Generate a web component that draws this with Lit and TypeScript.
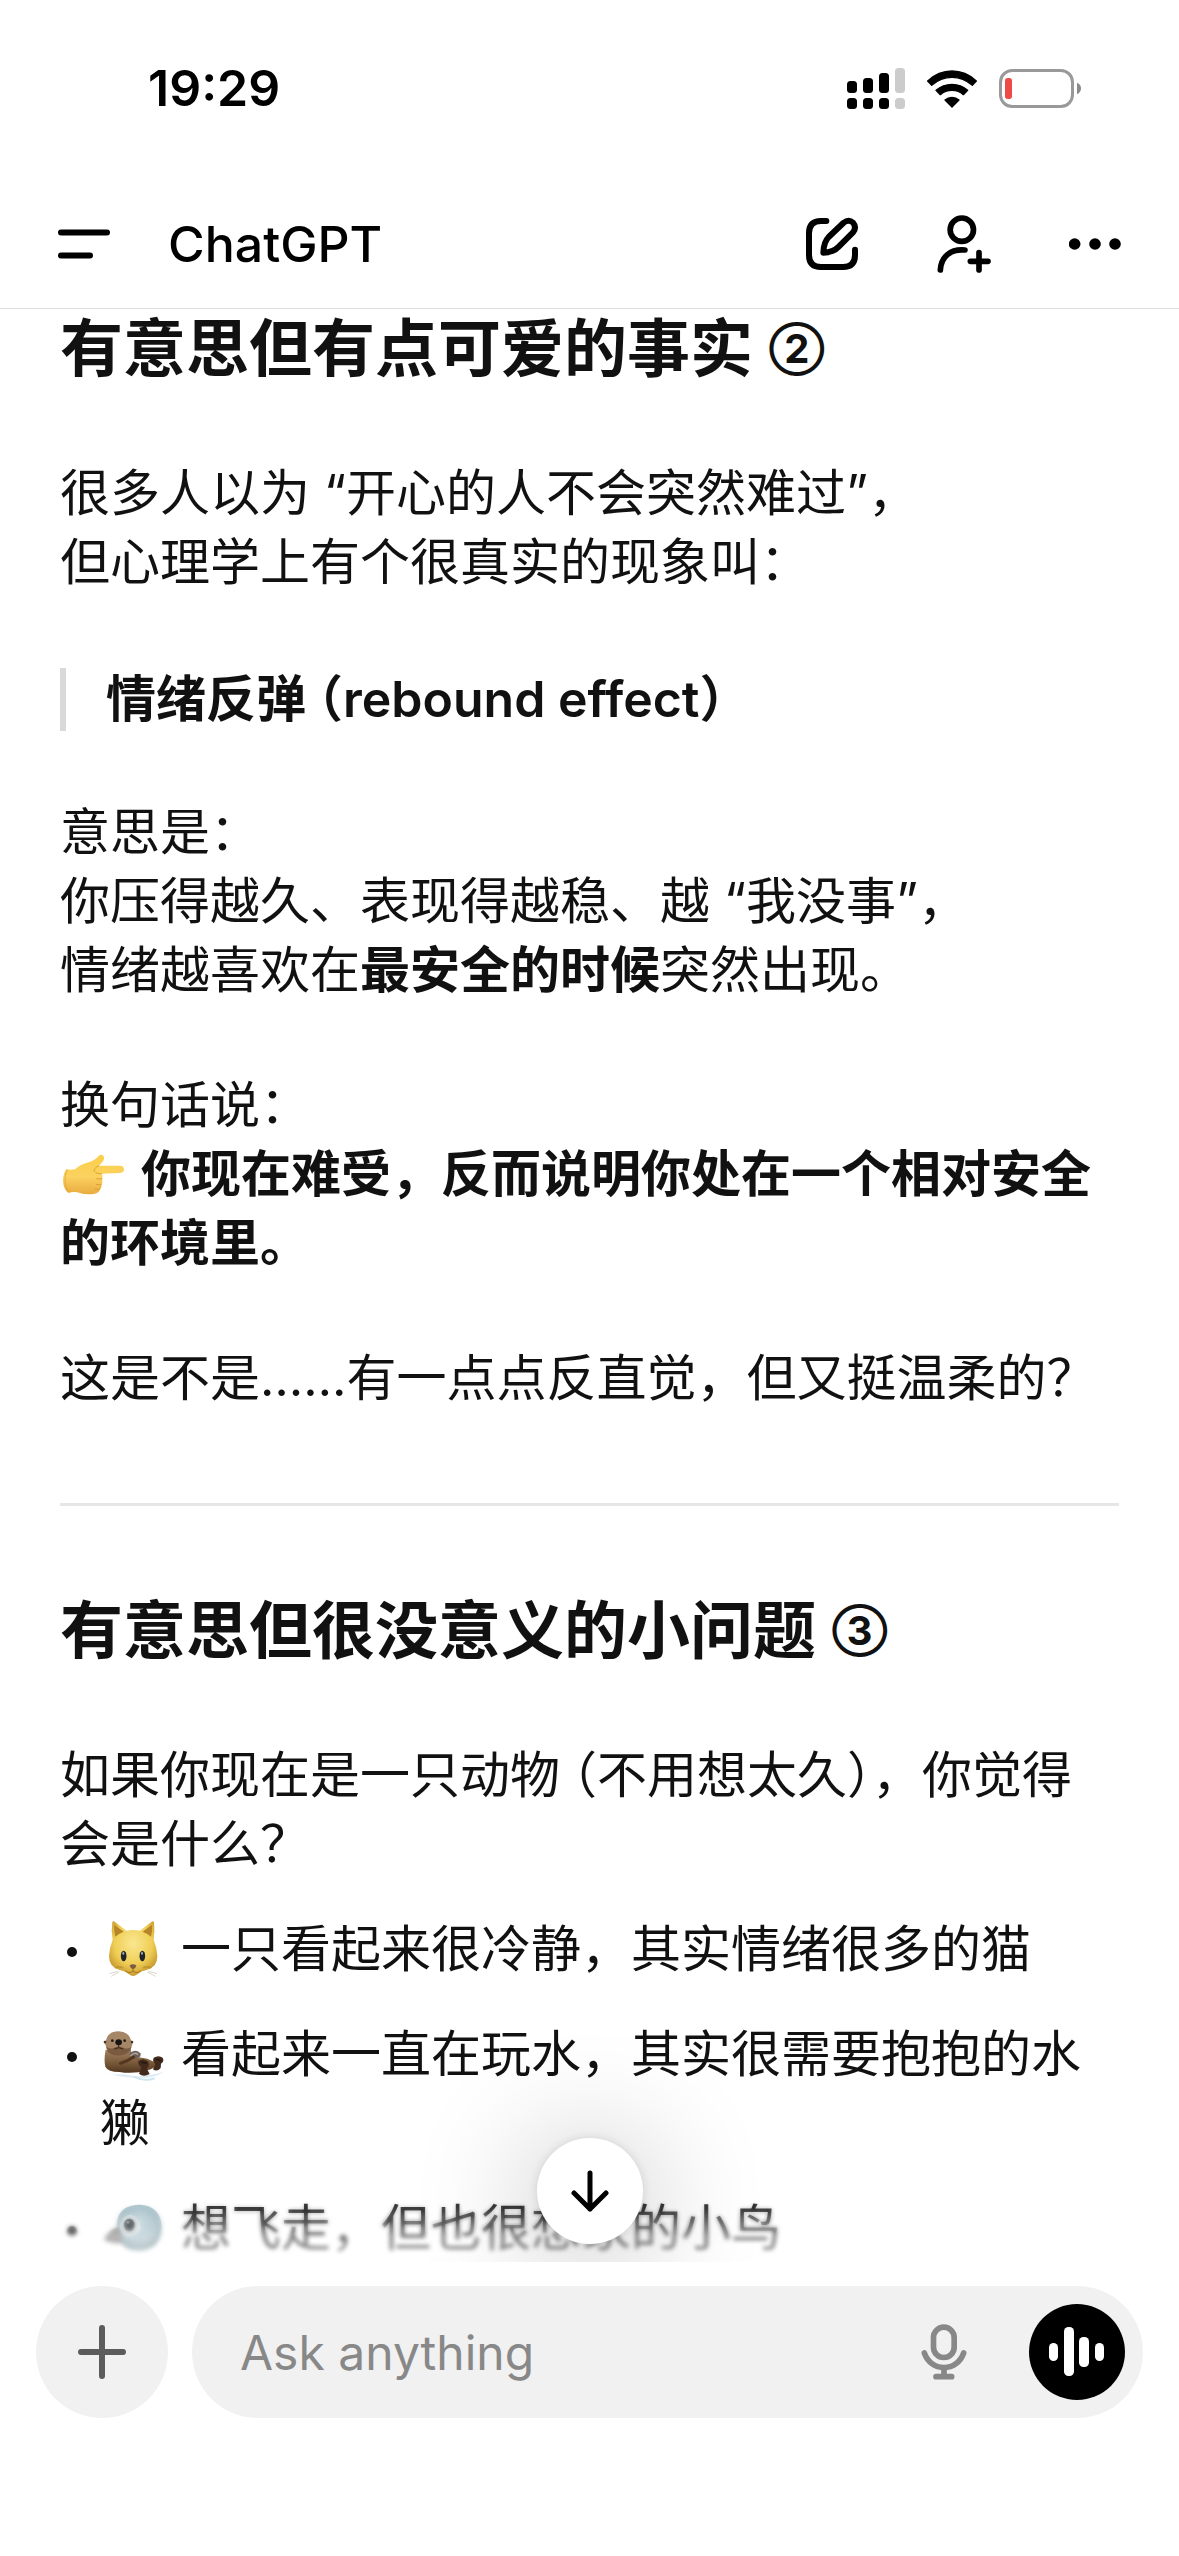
import { LitElement, html, css, svg } from "lit";
import { customElement } from "lit/decorators.js";

const signalIcon = html`<svg width="58" height="41" viewBox="0 0 58 41" role="img" aria-label="Signal">
  <g fill="#000">
    <rect x="0" y="13" width="10" height="12" rx="3.5" />
    <rect x="16" y="10" width="10" height="15" rx="3.5" />
    <rect x="32" y="5" width="10" height="20" rx="3.5" />
    <rect x="0" y="30" width="10" height="11" rx="3.5" />
    <rect x="16" y="30" width="10" height="11" rx="3.5" />
    <rect x="32" y="30" width="10" height="11" rx="3.5" />
  </g>
  <g fill="#ccc">
    <rect x="48" y="0" width="10" height="25" rx="3.5" />
    <rect x="48" y="30" width="10" height="11" rx="3.5" />
  </g>
</svg>`;

const wifiIcon = html`<svg width="50" height="38" viewBox="443 85 150 114" role="img" aria-label="Wi-Fi">
  <g stroke="#000" stroke-width="4" stroke-linejoin="round">
    <path d="M445 118Q477 88 518 88Q559 88 591 118L579 131Q552 107 518 107Q484 107 457 131Z" />
    <path d="M470 146Q491 128 518 128Q545 128 565 146L552 159Q538 146 518 146Q498 146 483 159Z" />
    <path d="M497 175Q506 167 518 167Q530 167 539 175L518 196Z" />
  </g>
</svg>`;

const batteryIcon = html`<svg width="82" height="39" viewBox="660 84 246 117" role="img" aria-label="Battery low">
  <rect x="664.5" y="88.5" width="216" height="108" rx="35" fill="none" stroke="#999" stroke-width="9" />
  <rect x="678" y="111" width="21" height="63" rx="8" fill="#ef4b46" />
  <path d="M894 125Q906 130 906 142Q906 154 894 160Z" fill="#8a8a8a" />
</svg>`;

const menuIcon = html`<svg width="52" height="30" viewBox="0 0 52 30" fill="none" stroke="#000" stroke-width="6" stroke-linecap="round">
  <path d="M3 3.500H49M3 26.500H32" />
</svg>`;

const editIcon = html`<svg width="54" height="54" viewBox="75 531 162 162" fill="none" stroke="#000" stroke-width="18" stroke-linecap="round" stroke-linejoin="round">
  <path d="M139 543H123Q87 543 87 580V645Q87 681 123 681H189Q225 681 225 645V629" />
  <path d="M130 638Q131 606 146 591L190 549Q206 536 219 548Q231 562 219 577L174 622Q161 637 130 638Z" />
</svg>`;

const personIcon = html`<svg width="54" height="58" viewBox="476 522 162 174" fill="none" stroke="#000" stroke-width="17" stroke-linecap="round">
  <circle cx="550.500" cy="566" r="35" />
  <path d="M486 687C488 648 516 623 560 627" />
  <path d="M602 635V687M576 661H629" />
</svg>`;

const moreIcon = html`<svg width="52" height="12" viewBox="870 592 156 36">
  <circle cx="887" cy="610" r="17.500" /><circle cx="948" cy="610" r="17.500" /><circle cx="1008" cy="610" r="17.500" />
</svg>`;

const arrowIcon = html`<svg width="38" height="42" viewBox="0 0 38 42" fill="none" stroke="#000" stroke-width="5" stroke-linecap="round" stroke-linejoin="round">
  <path d="M19 3V39M3 23L19 39L35 23" />
</svg>`;

const plusIcon = html`<svg width="48" height="54" viewBox="0 0 48 54" fill="none" stroke="#5c5c5c" stroke-width="6" stroke-linecap="round">
  <path d="M24 3V51M3 27H45" />
</svg>`;

const micIcon = html`<svg width="46" height="56" viewBox="425 194 138 168" fill="none" stroke="#888" stroke-width="17" stroke-linecap="round">
  <rect x="462.500" y="203.500" width="62" height="91" rx="31" />
  <path d="M435 281C445 309 468 325 494 325S543 309 553 281" />
  <path d="M494 328V350M470 352H517" />
</svg>`;

const voiceIcon = html`<svg width="56" height="50" viewBox="0 0 56 50" fill="#fff">
  <rect x="0" y="16" width="9" height="18" rx="4.500" />
  <rect x="15" y="0" width="10" height="49" rx="4.500" />
  <rect x="30" y="10" width="10" height="30" rx="4.500" />
  <rect x="46" y="16" width="9" height="18" rx="4.500" />
</svg>`;

const emojiArt = {
  hand: svg`
    <defs>
      <linearGradient id="hand-skin" x1="0" y1="0" x2="0" y2="1">
        <stop offset="0" stop-color="#fbcf4a" /><stop offset=".55" stop-color="#fbd260" /><stop offset="1" stop-color="#e9ab3e" />
      </linearGradient>
    </defs>
    <path d="M80 90Q88 94 105 91Q119 77 139 72Q164 66 176 51Q184 44 190 51Q196 58 187 69Q182 76 176 80L240 80Q252 81 252 91Q252 101 241 102L184 104Q190 110 186 119Q190 130 184 136Q187 146 180 150Q179 161 164 164Q136 169 112 160Q94 158 86 162Q70 154 69 124Q70 100 80 90Z" fill="url(#hand-skin)" />
    <path d="M176 80Q160 88 162 97M184 104Q169 105 166 99M186 119Q176 122 170 119M184 136Q176 139 169 136M180 150Q172 153 165 150" fill="none" stroke="#d9982f" stroke-width="2.500" stroke-linecap="round" />
    <path d="M81 92Q74 110 75 125Q76 149 88 159" fill="none" stroke="#e3a537" stroke-width="4" opacity=".6" />`,
  cat: svg`
    <defs>
      <radialGradient id="cat-fur" cx=".5" cy=".4" r=".6">
        <stop offset="0" stop-color="#f9e791" /><stop offset=".65" stop-color="#f0ce55" /><stop offset="1" stop-color="#c79a2f" />
      </radialGradient>
    </defs>
    <path d="M157 70Q158 65 164 68L199 95Q219 91 240 95L275 68Q281 65 282 71Q285 94 281 122Q291 147 292 171Q292 203 262 212Q243 216 232 226Q219 236 207 226Q196 216 177 212Q147 203 147 171Q148 147 158 122Q153 95 157 70Z" fill="url(#cat-fur)" />
    <path d="M163 77Q161 97 166 113Q175 104 191 98ZM276 77Q278 97 273 113Q264 104 248 98Z" fill="#b58526" />
    <ellipse cx="191" cy="171" rx="8.500" ry="16" fill="#1e252b" /><ellipse cx="247" cy="171" rx="8.500" ry="16" fill="#1e252b" />
    <ellipse cx="190" cy="163" rx="3" ry="4.500" fill="#9daab0" /><ellipse cx="246" cy="163" rx="3" ry="4.500" fill="#9daab0" />
    <path d="M209 199Q219 192 229 199Q228 208 219 211Q210 208 209 199Z" fill="#7d5c45" />
    <path d="M219 210V216M219 216Q207 226 196 215M219 216Q231 226 242 215" fill="none" stroke="#a8791e" stroke-width="3" />
    <path d="M165 207Q177 200 190 207M249 207Q262 200 274 207" fill="none" stroke="#b98d2c" stroke-width="5" opacity=".7" />
    <path d="M173 217L149 224M177 219L154 232M266 217L291 224M262 219L287 232" stroke="#b7ad92" stroke-width="1.500" />`,
  otter: svg`
    <defs>
      <linearGradient id="otter-fur" x1="0" y1="0" x2="0" y2="1">
        <stop offset="0" stop-color="#a48565" /><stop offset=".5" stop-color="#80603f" /><stop offset="1" stop-color="#52351f" />
      </linearGradient>
    </defs>
    <path d="M128 520Q150 530 190 526Q240 540 311 518Q285 538 235 537Q170 534 128 520Z" fill="#dcecf6" />
    <path d="M222 533Q250 549 284 538" fill="none" stroke="#cfe3f0" stroke-width="5" />
    <path d="M137 452Q131 483 136 503Q144 519 178 519Q222 526 259 514Q284 511 291 493L262 479Q235 474 216 475L212 448Z" fill="url(#otter-fur)" />
    <path d="M138 424Q144 397 175 397Q207 398 213 424Q221 430 216 439Q213 456 198 463Q175 471 152 463Q138 455 137 438Q129 432 138 424Z" fill="#a58768" />
    <path d="M140 443Q153 453 166 445Q176 440 187 445Q200 453 214 443Q210 464 188 468Q160 474 144 459Z" fill="#7b5b40" />
    <ellipse cx="176" cy="430" rx="10" ry="9" fill="#171413" />
    <path d="M176 436V445M163 450Q176 442 190 450" fill="none" stroke="#382619" stroke-width="3" />
    <circle cx="157" cy="425" r="4" fill="#251a13" /><circle cx="194" cy="425" r="4" fill="#251a13" />
    <circle cx="135" cy="429" r="4" fill="#493321" /><circle cx="216" cy="429" r="4" fill="#493321" />
    <path d="M209 462Q230 448 241 463Q246 475 229 479L210 476Z" fill="#6f625a" />
    <path d="M212 470Q225 458 233 466" fill="none" stroke="#b1a69c" stroke-width="4" stroke-linecap="round" />
    <path d="M181 493Q202 487 221 474" fill="none" stroke="#533721" stroke-width="9" stroke-linecap="round" />
    <path d="M235 486Q251 474 265 488Q270 500 260 508L269 525Q250 536 237 524Q242 514 244 505Q233 497 235 486Z" fill="#412a1c" />
    <path d="M281 476Q296 467 308 476Q314 487 303 494L302 507Q291 520 279 511L286 495Q276 486 281 476Z" fill="#412a1c" />
    <path d="M245 490L259 492M289 481L301 484" stroke="#201510" stroke-width="4" stroke-linecap="round" />`,
  bird: svg`
    <defs>
      <radialGradient id="bird-head" cx=".5" cy=".35" r=".62">
        <stop offset="0" stop-color="#bdd3da" /><stop offset=".7" stop-color="#9db8c1" /><stop offset="1" stop-color="#66828c" />
      </radialGradient>
    </defs>
    <path d="M180 978Q148 987 132 1018Q145 1033 194 1031Z" fill="#7d7d7d" />
    <path d="M134 1018Q160 1017 190 1022" fill="none" stroke="#555" stroke-width="3" />
    <path d="M170 975Q173 915 238 914Q304 917 305 983Q303 1049 237 1052Q195 1051 183 1029Q195 1008 170 975Z" fill="url(#bird-head)" />
    <path d="M180 980Q184 945 212 944Q236 949 243 986Q226 1008 201 1007Q184 1003 180 980Z" fill="#dce3e5" />
    <ellipse cx="208" cy="975" rx="16" ry="19" fill="#20282d" />
    <circle cx="204" cy="967" r="5" fill="#9aa7ac" />`,
};

@customElement("app-root")
export class AppRoot extends LitElement {
  static styles = css`
    :host {
      display: flex;
      flex-direction: column;
      height: 100vh;
      background: #fff;
      color: #111;
      font-family: Inter, "Noto Sans CJK SC", sans-serif;
      font-size: 50px;
      line-height: 69px;
    }
    * {
      box-sizing: border-box;
    }
    svg {
      display: block;
      flex: none;
    }
    button {
      display: flex;
      align-items: center;
      justify-content: center;
      flex: none;
      margin: 0;
      padding: 0;
      border: 0;
      background: none;
      cursor: pointer;
    }
    .top {
      flex: none;
      color: #000;
      border-bottom: 1px solid #dedede;
    }
    .status {
      display: flex;
      align-items: center;
      justify-content: space-between;
      padding: 54px 98px 57px 148px;
    }
    .time {
      font-weight: 600;
    }
    .indicators {
      display: flex;
      align-items: center;
      gap: 22px;
    }
    .nav {
      display: flex;
      align-items: center;
      gap: 58px;
      height: 128px;
      padding: 0 58px;
    }
    .title {
      margin: 0;
      flex: 1;
      font-size: 50px;
      font-weight: 500;
    }
    .actions {
      display: flex;
      align-items: center;
      gap: 78px;
    }
    .chat {
      position: relative;
      flex: 1;
      min-height: 0;
      overflow: hidden;
    }
    .message {
      padding: 3px 60px 0;
    }
    h2 {
      margin: 0 0 75px;
      font-size: 63px;
      line-height: 72px;
      font-weight: 600;
    }
    .number {
      font-size: 40px;
      font-weight: 700;
      line-height: 40px;
      vertical-align: 8px;
    }
    .open {
      margin-left: 12px;
      font-feature-settings: "halt";
    }
    p {
      margin: 0 0 66px;
    }
    strong {
      font-weight: 600;
    }
    blockquote {
      display: flex;
      align-items: center;
      gap: 40px;
      margin: 68px 0 64px;
    }
    blockquote::before {
      content: "";
      width: 6px;
      height: 63px;
      background: #d9d9d9;
    }
    hr {
      height: 3px;
      margin: 90px 0 88px;
      border: 0;
      background: #e6e6e6;
    }
    ul {
      display: flex;
      flex-direction: column;
      gap: 36px;
      margin: -30px 0 0;
      padding: 0;
      list-style: none;
    }
    li {
      display: grid;
      grid-template-columns: 40px 1fr;
    }
    li::before {
      content: "";
      width: 10px;
      height: 10px;
      margin: 32px 0 0 7px;
      border-radius: 50%;
      background: #111;
    }
    .emoji {
      display: inline-block;
      width: 67px;
      height: 60px;
      vertical-align: -12px;
    }
    .fade {
      position: absolute;
      inset: auto 0 0;
      height: 66px;
      backdrop-filter: blur(2px);
      background: linear-gradient(rgba(255, 255, 255, 0.1), rgba(255, 255, 255, 0.65));
      mask-image: linear-gradient(transparent, #000 60%);
      pointer-events: none;
    }
    .jump {
      position: absolute;
      bottom: 18px;
      left: calc(50% - 53px);
      width: 106px;
      height: 106px;
      border-radius: 50%;
      background: #fff;
      box-shadow: 0 0 12px rgba(0, 0, 0, 0.12), 0 12px 120px 10px rgba(0, 0, 0, 0.24);
    }
    .composer {
      display: flex;
      flex: none;
      gap: 24px;
      padding: 24px 36px 138px;
    }
    .add {
      width: 132px;
      height: 132px;
      border-radius: 50%;
      background: #f1f1f1;
    }
    .field {
      display: flex;
      flex: 1;
      align-items: center;
      min-width: 0;
      height: 132px;
      padding: 0 18px 0 48px;
      border-radius: 66px;
      background: #f1f1f1;
    }
    .field input {
      flex: 1;
      min-width: 0;
      padding: 0;
      border: 0;
      outline: 0;
      background: none;
      color: #111;
      font: inherit;
      font-size: 48px;
    }
    .field input::placeholder {
      color: #888;
      opacity: 1;
    }
    .voice {
      width: 96px;
      height: 96px;
      margin-left: 62px;
      border-radius: 50%;
      background: #000;
    }
  `;

  private emoji(name: keyof typeof emojiArt, label: string, viewBox: string) {
    return html`<svg class="emoji" viewBox=${viewBox} role="img" aria-label=${label}>${emojiArt[name]}</svg>`;
  }

  render() {
    return html`
      <header class="top">
        <div class="status">
          <span class="time">19:29</span>
          <div class="indicators">${signalIcon}${wifiIcon}${batteryIcon}</div>
        </div>
        <nav class="nav">
          <button aria-label="Menu">${menuIcon}</button>
          <h1 class="title">ChatGPT</h1>
          <div class="actions">
            <button aria-label="New chat">${editIcon}</button>
            <button aria-label="Add people">${personIcon}</button>
            <button aria-label="More">${moreIcon}</button>
          </div>
        </nav>
      </header>
      <main class="chat">
        <article class="message" lang="zh-CN">
          <h2>有意思但有点可爱的事实 <span class="number">②</span></h2>
          <p>很多人以为 “开心的人不会突然难过”，<br />但心理学上有个很真实的现象叫：</p>
          <blockquote><strong>情绪反弹<span class="open">（</span>rebound effect）</strong></blockquote>
          <p>
            意思是：<br />你压得越久、表现得越稳、越 “我没事”，<br />情绪越喜欢在<strong>最安全的时候</strong>突然出现。
          </p>
          <p>
            换句话说：<br />${this.emoji("hand", "👉", "60 15 201 180")}
            <strong>你现在难受，反而说明你处在一个相对安全的环境里。</strong>
          </p>
          <p>这是不是……有一点点反直觉，但又挺温柔的？</p>
          <hr />
          <h2>有意思但很没意义的小问题 <span class="number">③</span></h2>
          <p>如果你现在是一只动物<span class="open">（</span>不用想太久），你觉得会是什么？</p>
          <ul>
            <li><span>${this.emoji("cat", "🐱", "120 60 201 180")} 一只看起来很冷静，其实情绪很多的猫</span></li>
            <li><span>${this.emoji("otter", "🦦", "120 375 201 180")} 看起来一直在玩水，其实很需要抱抱的水獭</span></li>
            <li><span>${this.emoji("bird", "🐦", "120 894 201 180")} 想飞走，但也很想家的小鸟</span></li>
          </ul>
        </article>
        <div class="fade"></div>
        <button class="jump" aria-label="Scroll to bottom">${arrowIcon}</button>
      </main>
      <footer class="composer">
        <button class="add" aria-label="Add attachment">${plusIcon}</button>
        <div class="field">
          <input type="text" placeholder="Ask anything" aria-label="Ask anything" />
          <button aria-label="Dictate">${micIcon}</button>
          <button class="voice" aria-label="Voice mode">${voiceIcon}</button>
        </div>
      </footer>
    `;
  }
}
